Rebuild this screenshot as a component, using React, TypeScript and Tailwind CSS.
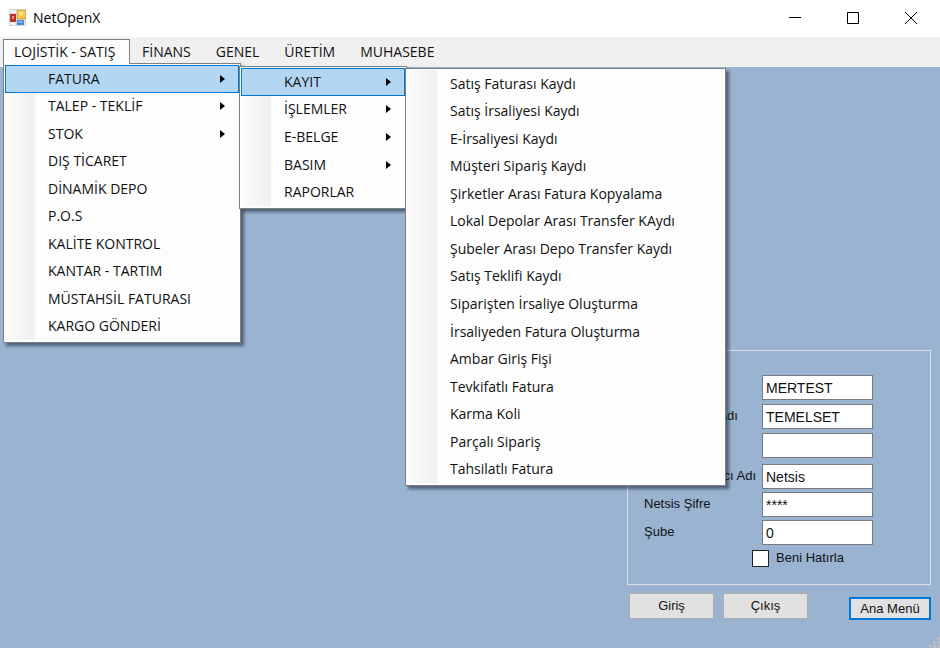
import React from "react";

type MenuEntry = { label: string; arrow?: boolean; children?: MenuEntry[] };

const recordItems: MenuEntry[] = [
  "Satış Faturası Kaydı",
  "Satış İrsaliyesi Kaydı",
  "E-İrsaliyesi Kaydı",
  "Müşteri Sipariş Kaydı",
  "Şirketler Arası Fatura Kopyalama",
  "Lokal Depolar Arası Transfer KAydı",
  "Şubeler Arası Depo Transfer Kaydı",
  "Satış Teklifi Kaydı",
  "Siparişten İrsaliye Oluşturma",
  "İrsaliyeden Fatura Oluşturma",
  "Ambar Giriş Fişi",
  "Tevkifatlı Fatura",
  "Karma Koli",
  "Parçalı Sipariş",
  "Tahsilatlı Fatura",
].map((label) => ({ label }));

const invoiceItems: MenuEntry[] = [
  { label: "KAYIT", arrow: true, children: recordItems },
  { label: "İŞLEMLER", arrow: true },
  { label: "E-BELGE", arrow: true },
  { label: "BASIM", arrow: true },
  { label: "RAPORLAR" },
];

const salesItems: MenuEntry[] = [
  { label: "FATURA", arrow: true, children: invoiceItems },
  { label: "TALEP - TEKLİF", arrow: true },
  { label: "STOK", arrow: true },
  { label: "DIŞ TİCARET" },
  { label: "DİNAMİK DEPO" },
  { label: "P.O.S" },
  { label: "KALİTE KONTROL" },
  { label: "KANTAR - TARTIM" },
  { label: "MÜSTAHSİL FATURASI" },
  { label: "KARGO GÖNDERİ" },
];

const levels = [
  { place: "left-0 top-full w-[238px]", height: "h-[275px]" },
  { place: "left-full top-px w-[168px]", height: "h-[138px]" },
  { place: "left-full top-0 w-[321px]", height: "h-[413px]" },
];

function Menu({ items, level }: { items: MenuEntry[]; level: number }) {
  const { place, height } = levels[level];
  return (
    <div
      className={`absolute z-10 border border-[#808080] bg-[#fdfdfd] px-px pt-px pb-[2px] shadow-[3px_3px_3px_rgba(30,40,60,0.6)] ${place}`}
    >
      <ul
        role="menu"
        className={`flex flex-col bg-linear-to-r from-[#fcfcfc] to-[#f0f0f0] bg-[length:30px_100%] bg-no-repeat ${height}`}
      >
        {items.map((item) => (
          <li key={item.label} role="none" className="relative flex flex-1">
            <button
              role="menuitem"
              className={`flex flex-1 items-center justify-between border pr-3 pl-[42px] whitespace-nowrap ${
                item.children ? "border-[#0078d7] bg-[#b3d7f3]" : "border-transparent"
              }`}
            >
              {item.label}
              {item.arrow && (
                <svg width="6" height="8" viewBox="0 0 6 8" aria-hidden="true">
                  <path d="M0 0L5 4L0 8Z" fill="#000" />
                </svg>
              )}
            </button>
            {item.children && <Menu items={item.children} level={level + 1} />}
          </li>
        ))}
      </ul>
    </div>
  );
}

function Field({ id, label, value, type = "text" }: { id: string; label: string; value: string; type?: string }) {
  return (
    <div className="flex items-center">
      <label htmlFor={id} className="w-[118px] pb-[2px] whitespace-nowrap">
        {label}
      </label>
      <input
        id={id}
        type={type}
        defaultValue={value}
        className="h-[25px] w-[111px] border border-[#7a7a7a] bg-white px-[3px] text-[14px] outline-none"
      />
    </div>
  );
}

export default function App() {
  return (
    <div className="relative flex min-h-screen flex-col bg-[#99b3d1] font-['Open_Sans','Noto_Sans',sans-serif] text-[14px] leading-5 text-[#111]">
      <header className="flex h-[37px] items-center justify-between bg-white pl-[9px] text-black">
        <div className="flex items-center gap-[6px] pb-[2px]">
          <svg width="18" height="18" viewBox="0 0 18 18" aria-hidden="true">
            <rect x="0.5" y="0.5" width="16" height="16" fill="#f0f0f0" stroke="#d4d4d4" />
            <path d="M7.5 0V17M0 4.5H8M0 12.5H17M7 10.5H17" stroke="#d4d4d4" />
            <rect x="1" y="5" width="6" height="8" fill="#b8332e" />
            <rect x="3" y="7" width="2" height="3" fill="#e58a80" />
            <rect x="8" y="1" width="9" height="9" fill="#d9a62f" />
            <rect x="9" y="2" width="7" height="7" fill="#fbcf48" />
            <rect x="10" y="3" width="4" height="3" fill="#fde59a" />
            <rect x="8" y="11" width="7" height="5" fill="#4a86dc" />
            <rect x="9" y="12" width="5" height="2" fill="#7fb0f2" />
          </svg>
          <h1>NetOpenX</h1>
        </div>
        <div className="flex pb-px">
          <button aria-label="Simge durumuna küçült" className="flex w-[58px] justify-center">
            <svg width="12" height="12" viewBox="0 0 12 12">
              <path d="M0 5.5H12" stroke="#000" />
            </svg>
          </button>
          <button aria-label="Ekranı kapla" className="flex w-[58px] justify-center">
            <svg width="12" height="12" viewBox="0 0 12 12">
              <path d="M0.5 0.5H11.5V11.5H0.5Z" fill="none" stroke="#000" />
            </svg>
          </button>
          <button aria-label="Kapat" className="flex w-[58px] justify-center">
            <svg width="12" height="12" viewBox="0 0 12 12">
              <path d="M0 0L12 12M12 0L0 12" stroke="#000" />
            </svg>
          </button>
        </div>
      </header>

      <nav className="flex h-[30px] bg-[#f0f0f0] pt-[2px] pb-1 pl-[3px]">
        <div className="relative">
          <button className="relative z-20 h-[25px] w-[127px] border border-b-0 border-[#808080] bg-[#fdfdfd] text-left pl-[10px] whitespace-nowrap">
            LOJİSTİK - SATIŞ
          </button>
          <Menu items={salesItems} level={0} />
        </div>
        <div className="flex gap-px pt-px">
          {["FİNANS", "GENEL", "ÜRETİM", "MUHASEBE"].map((name) => (
            <button key={name} className="px-3">
              {name}
            </button>
          ))}
        </div>
      </nav>

      <main className="flex flex-1 items-end justify-end pr-[9px] pb-7 font-['Liberation_Sans',Arial,sans-serif] text-[13px]">
        <form className="flex w-[304px] flex-col gap-2">
          <fieldset className="flex flex-col gap-[6px] border border-[#dcdfe3] pt-6 pb-4 pl-4">
            <div className="flex flex-col gap-1">
              <Field id="database" label="Veritabanı" value="MERTEST" />
              <Field id="dbuser" label="DB Kullanıcı Adı" value="TEMELSET" />
              <Field id="dbpass" label="DB Şifre" value="" />
            </div>
            <div className="flex flex-col gap-[3px]">
              <Field id="user" label="Netsis Kullanıcı Adı" value="Netsis" />
              <Field id="pass" label="Netsis Şifre" value="****" />
              <Field id="branch" label="Şube" value="0" />
              <label className="flex items-center gap-[7px] pl-[108px]">
                <input
                  type="checkbox"
                  className="size-[17px] appearance-none border border-[#222] bg-white"
                />
                Beni Hatırla
              </label>
            </div>
          </fieldset>
          <div className="flex items-start justify-between pl-[2px]">
            <div className="flex gap-[9px]">
              <button type="button" className="h-[26px] w-[85px] border border-[#adadad] bg-[#e1e1e1]">
                Giriş
              </button>
              <button type="button" className="h-[26px] w-[85px] border border-[#adadad] bg-[#e1e1e1]">
                Çıkış
              </button>
            </div>
            <button type="button" className="mt-1 h-[23px] w-[82px] border-2 border-[#0078d7] bg-[#e1e1e1]">
              Ana Menü
            </button>
          </div>
        </form>
      </main>
      <svg className="absolute right-0 bottom-0" width="12" height="12" viewBox="0 0 12 12" aria-hidden="true">
        <path
          d="M9 1h3v3H9zM9 5h3v3H9zM5 5h3v3H5zM9 9h3v3H9zM5 9h3v3H5zM1 9h3v3H1z"
          fill="#b9bcc3"
        />
      </svg>
    </div>
  );
}
